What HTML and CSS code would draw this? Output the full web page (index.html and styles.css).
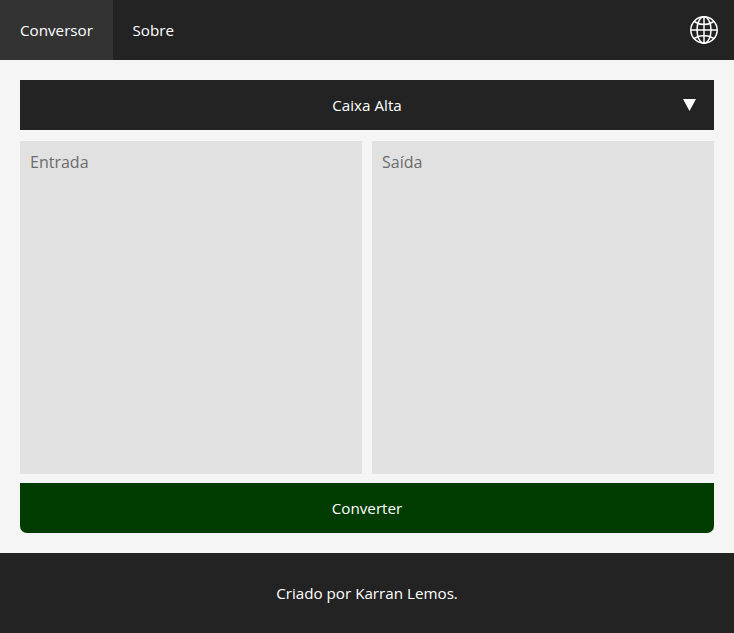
FILE: index.html
```html
<!DOCTYPE html>
<html lang="pt-BR">
<head>
<meta charset="utf-8">
<title>Conversor</title>
<link rel="stylesheet" href="styles.css">
</head>
<body>
<header class="topbar">
  <nav class="nav">
    <a class="nav-link active">Conversor</a>
    <a class="nav-link">Sobre</a>
  </nav>
  <svg class="globe" viewBox="0 0 30 30" fill="none" stroke="#fff" stroke-width="1.5">
    <circle cx="15" cy="15" r="13.2"/>
    <ellipse cx="15" cy="15" rx="7" ry="13.2"/>
    <path d="M15 1.8v26.4M1.8 15h26.4M5 6.5Q15 12.5 25 6.5M5 23.5Q15 17.500 25 23.5"/>
  </svg>
</header>
<main class="converter">
  <div class="select"><span>Caixa Alta</span><svg class="arrow" viewBox="0 0 13 12"><path d="M0 0h13L6.5 12z" fill="#fff"/></svg></div>
  <div class="fields">
    <textarea class="field" placeholder="Entrada"></textarea>
    <textarea class="field" placeholder="Saída" readonly></textarea>
  </div>
  <button class="convert">Converter</button>
</main>
<footer class="footer">Criado por Karran Lemos.</footer>
</body>
</html>
```
FILE: styles.css
```css
* { box-sizing: border-box; }
body {
  margin: 0;
  height: 633px;
  display: flex;
  flex-direction: column;
  background: #f5f5f5;
  color: #fff;
  font: 15.2px "Open Sans", sans-serif;
}
.topbar {
  height: 60px;
  display: flex;
  justify-content: space-between;
  align-items: center;
  padding-right: 15px;
  background: #232323;
}
.nav { display: flex; height: 100%; }
.nav-link { display: flex; align-items: center; padding: 0 20px; }
.nav-link + .nav-link { padding-left: 19.5px; }
.active { background: #333; }
.globe { width: 30px; height: 30px; }
.converter {
  flex: 1;
  display: flex;
  flex-direction: column;
  padding: 20px;
}
.select {
  position: relative;
  height: 50px;
  display: flex;
  align-items: center;
  justify-content: center;
  background: #232323;
}
.arrow { position: absolute; right: 18px; top: 19px; width: 13px; height: 12px; }
.fields { flex: 1; display: flex; gap: 10px; margin: 11px 0 9px; }
.field {
  flex: 1;
  min-width: 0;
  padding: 10px;
  border: 0;
  outline: 0;
  resize: none;
  background: #e1e1e1;
  font: 16px "Open Sans", sans-serif;
}
.field::placeholder { color: #6c6c6c; }
.convert {
  height: 50px;
  border: 0;
  border-radius: 0 0 7px 7px;
  background: #003c00;
  color: #fff;
  font: inherit;
}
.footer {
  height: 80px;
  display: flex;
  align-items: center;
  justify-content: center;
  background: #232323;
}
```
